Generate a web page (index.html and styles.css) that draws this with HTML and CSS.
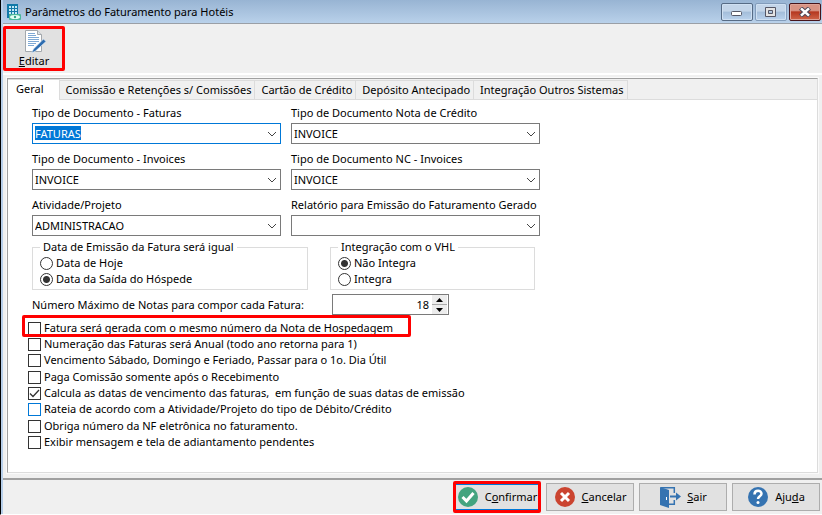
FILE: index.html
```html
<!DOCTYPE html>
<html lang="pt-BR">
<head>
  <meta charset="UTF-8">
  <meta name="viewport" content="width=device-width, initial-scale=1.0">
  <title>Parâmetros do Faturamento para Hotéis</title>
  <link rel="stylesheet" href="styles.css">
</head>
<body>
<div class="window">
  <header class="titlebar">
    <svg class="app-icon" width="14" height="16" viewBox="0 0 14 16">
      <path fill="#1279a8" d="M0 0h11v14H0z"/>
      <path fill="#c4e9f5" d="M2 2h2v2H2zM5 2h2v2H5zM8 2h2v2H8zM2 5h2v2H2zM5 5h2v2H5zM8 5h2v2H8zM2 8h2v2H2zM5 8h2v2H5zM8 8h2v2H8z"/>
      <rect x="2" y="10" width="12" height="6" rx="1" fill="#4cb79a"/>
      <ellipse cx="8" cy="13" rx="5" ry="2" fill="#e5fff5"/>
      <circle cx="8" cy="13" r="1.200" fill="#35a083"/>
    </svg>
    <h1 class="title">Parâmetros do Faturamento para Hotéis</h1>
    <div class="win-buttons">
      <button class="win-btn" aria-label="Minimizar">
        <svg width="12" height="10" viewBox="0 0 12 10"><rect x=".5" y="4.500" width="10" height="4" rx="1" fill="#fff" stroke="#555766"/></svg>
      </button>
      <button class="win-btn dim" aria-label="Maximizar">
        <svg width="12" height="10" viewBox="0 0 12 10"><path fill="#e4e4e4" fill-rule="evenodd" stroke="#555766" d="M.5.5h10v9H.5zM3.500 3.500h4v3h-4z"/></svg>
      </button>
      <button class="win-btn close" aria-label="Fechar">
        <svg width="12" height="10" viewBox="0 0 12 10"><path stroke="#4e4656" stroke-width="4.500" d="M1.500 1l9 8m0-8l-9 8"/><path stroke="#fff" stroke-width="2.500" d="M2 1.300l8 7.400m0-7.400L2 8.700"/></svg>
      </button>
    </div>
  </header>

  <div class="toolbar">
    <button class="tool-btn marked">
      <svg width="24" height="24" viewBox="0 0 24 24">
        <path fill="#fff" stroke="#a3a8ad" d="M3.500 1.500h12l4 4v17h-16z"/>
        <path fill="#dfe3e6" stroke="#a3a8ad" d="M15.500 1.500v4h4"/>
        <path stroke="#7fa9d4" d="M6 4.500h7M6 6.500h8M6 8.500h11M6 10.500h11M6 12.500h11M6 14.500h8M6 16.500h6"/>
        <path fill="#2d6cb0" stroke="#e9f1f9" stroke-width=".6" d="M21.500 10l2.500 2.500-10.500 9.500-4 2 2-4z"/>
      </svg>
      <span><u>E</u>ditar</span>
    </button>
  </div>

  <main class="pages">
    <nav class="tabs">
      <button class="tab active">Geral</button>
      <button class="tab">Comissão e Retenções s/ Comissões</button>
      <button class="tab">Cartão de Crédito</button>
      <button class="tab">Depósito Antecipado</button>
      <button class="tab">Integração Outros Sistemas</button>
    </nav>

    <form class="page">
      <div class="fields">
        <div class="field">
          <label for="docFaturas">Tipo de Documento - Faturas</label>
          <div class="combo">
            <select id="docFaturas" class="focused"><option>FATURAS</option></select>
            <svg class="arrow" width="10" height="6" viewBox="0 0 10 6"><path d="M1 1l4 4 4-4"/></svg>
          </div>
        </div>
        <div class="field">
          <label for="docNota">Tipo de Documento Nota de Crédito</label>
          <div class="combo">
            <select id="docNota"><option>INVOICE</option></select>
            <svg class="arrow" width="10" height="6" viewBox="0 0 10 6"><path d="M1 1l4 4 4-4"/></svg>
          </div>
        </div>
        <div class="field">
          <label for="docInvoices">Tipo de Documento - Invoices</label>
          <div class="combo">
            <select id="docInvoices"><option>INVOICE</option></select>
            <svg class="arrow" width="10" height="6" viewBox="0 0 10 6"><path d="M1 1l4 4 4-4"/></svg>
          </div>
        </div>
        <div class="field">
          <label for="docNC">Tipo de Documento NC - Invoices</label>
          <div class="combo">
            <select id="docNC"><option>INVOICE</option></select>
            <svg class="arrow" width="10" height="6" viewBox="0 0 10 6"><path d="M1 1l4 4 4-4"/></svg>
          </div>
        </div>
        <div class="field">
          <label for="atividade">Atividade/Projeto</label>
          <div class="combo">
            <select id="atividade"><option>ADMINISTRACAO</option></select>
            <svg class="arrow" width="10" height="6" viewBox="0 0 10 6"><path d="M1 1l4 4 4-4"/></svg>
          </div>
        </div>
        <div class="field">
          <label for="relatorio">Relatório para Emissão do Faturamento Gerado</label>
          <div class="combo">
            <select id="relatorio"><option></option></select>
            <svg class="arrow" width="10" height="6" viewBox="0 0 10 6"><path d="M1 1l4 4 4-4"/></svg>
          </div>
        </div>
      </div>

      <div class="groups">
        <fieldset class="group group-data">
          <legend>Data de Emissão da Fatura será igual</legend>
          <label class="option"><input type="radio" name="data">Data de Hoje</label>
          <label class="option"><input type="radio" name="data" checked>Data da Saída do Hóspede</label>
        </fieldset>
        <fieldset class="group group-vhl">
          <legend>Integração com o VHL</legend>
          <label class="option"><input type="radio" name="vhl" checked>Não Integra</label>
          <label class="option"><input type="radio" name="vhl">Integra</label>
        </fieldset>
      </div>

      <div class="max-row">
        <label for="maxNotas">Número Máximo de Notas para compor cada Fatura:</label>
        <div class="spin">
          <input type="text" id="maxNotas" value="18">
          <div class="spin-buttons">
            <button type="button" aria-label="Aumentar"><svg width="7" height="4" viewBox="0 0 7 4"><path d="M0 4l3.500-4L7 4z"/></svg></button>
            <button type="button" aria-label="Diminuir"><svg width="7" height="4" viewBox="0 0 7 4"><path d="M0 0l3.500 4L7 0z"/></svg></button>
          </div>
        </div>
      </div>

      <div class="checks">
        <div class="check-set">
          <label class="option marked"><input type="checkbox">Fatura será gerada com o mesmo número da Nota de Hospedagem</label>
          <label class="option"><input type="checkbox">Numeração das Faturas será Anual (todo ano retorna para 1)</label>
          <label class="option"><input type="checkbox">Vencimento Sábado, Domingo e Feriado, Passar para o 1o. Dia Útil</label>
        </div>
        <div class="check-set">
          <label class="option"><input type="checkbox">Paga Comissão somente após o Recebimento</label>
          <label class="option"><input type="checkbox" checked>Calcula as datas de vencimento das faturas,&nbsp; em função de suas datas de emissão</label>
          <label class="option"><input type="checkbox" class="hot">Rateia de acordo com a Atividade/Projeto do tipo de Débito/Crédito</label>
        </div>
        <div class="check-set">
          <label class="option"><input type="checkbox">Obriga número da NF eletrônica no faturamento.</label>
          <label class="option"><input type="checkbox">Exibir mensagem e tela de adiantamento pendentes</label>
        </div>
      </div>
    </form>
  </main>

  <footer class="footer">
    <button class="btn default marked">
      <svg width="22" height="22" viewBox="0 0 22 22"><circle cx="11" cy="11" r="10" fill="#43a47f"/><path fill="none" stroke="#fff" stroke-width="3" d="M5.500 11l4 4 7-8"/></svg>
      <span>C<u>o</u>nfirmar</span>
    </button>
    <button class="btn">
      <svg width="22" height="22" viewBox="0 0 22 22"><circle cx="11" cy="11" r="10" fill="#cb4430"/><path stroke="#fff" stroke-width="3" d="M7 7l8 8m0-8l-8 8"/></svg>
      <span><u>C</u>ancelar</span>
    </button>
    <button class="btn">
      <svg width="22" height="22" viewBox="0 0 22 22"><path fill="none" stroke="#3573b1" stroke-width="1.500" d="M2 1.700h13.300V7M15.300 14v4.300H9"/><path fill="#3573b1" d="M1 1l9 3v18l-9-3z"/><path fill="#fff" d="M7 11h1v3H7z"/><path fill="none" stroke="#3573b1" stroke-width="2" d="M11 10.500h9"/><path fill="#3573b1" d="M17 6.500l5 4-5 4z"/></svg>
      <span><u>S</u>air</span>
    </button>
    <button class="btn">
      <svg width="22" height="22" viewBox="0 0 22 22"><circle cx="11" cy="11" r="10" fill="#3573b1"/><path fill="none" stroke="#fff" stroke-width="2.500" d="M7.500 8.500c0-5 7-4.500 7-.8 0 2.600-3.500 2.600-3.500 5.300"/><circle cx="11" cy="16.500" r="1.500" fill="#fff"/></svg>
      <span>Aju<u>d</u>a</span>
    </button>
  </footer>
</div>
</body>
</html>
```
FILE: styles.css
```css
*, *::before {
  box-sizing: border-box;
}

body {
  margin: 0;
  background: #fff;
}

body, button, input, select {
  font-family: "Noto Sans", "Open Sans", sans-serif;
  font-size: 11px;
  line-height: 16px;
  color: #000;
}

button {
  padding: 0;
  border: 0;
}

svg {
  display: block;
  flex: none;
}

.window {
  display: flex;
  flex-direction: column;
  min-height: 100vh;
  background: #f0f0f0;
  border-left: 1px solid #000;
  border-bottom: 1px solid #fff;
  box-shadow: inset 2px 0 #b7cfea;
  padding-left: 2px;
}

/* title bar */
.titlebar {
  display: flex;
  align-items: center;
  height: 24px;
  padding: 0 1px 0 4px;
  background: linear-gradient(#98b4d3, #b9d1ea);
  border-bottom: 1px solid #9a9fa6;
}

.title {
  flex: 1;
  margin: 0 0 0 4px;
  font-size: 11px;
  font-weight: normal;
}

.win-buttons {
  display: flex;
  gap: 2px;
}

.win-btn {
  display: flex;
  align-items: center;
  justify-content: center;
  width: 32px;
  height: 18px;
  border: 1px solid #566b85;
  border-radius: 2px;
  background: linear-gradient(#c3d5e9 45%, #a3bdd9 50%, #bbd3ed);
  box-shadow: inset 0 0 0 1px #cfe0f2;
}

.win-btn.dim {
  border-color: #829cbb;
}

.win-btn.close {
  border-color: #45141b;
  background: linear-gradient(#d89384 40%, #b53820 50%, #cf6549);
  box-shadow: inset 0 0 0 1px #dfa397;
}

/* toolbar */
.toolbar {
  padding: 2px 0;
  border-bottom: 2px solid #fff;
}

.tool-btn {
  display: flex;
  flex-direction: column;
  align-items: center;
  width: 62px;
  height: 45px;
  background: #e1e1e1;
}

.marked {
  border: 3px solid #f00;
  border-radius: 2px;
}

/* tabbed pages */
.pages {
  flex: 1;
  display: flex;
  flex-direction: column;
  margin: 3px 4px 5px;
  border: 1px solid #a0a0a0;
  border-right-color: #dcdcdc;
  border-bottom-color: #dcdcdc;
  box-shadow: 0 0 0 1px #fafafa;
}

.tabs {
  display: flex;
  align-items: flex-end;
  height: 21px;
  border-bottom: 1px solid #dcdcdc;
}

.tab {
  height: 19px;
  padding: 0 3px 0 6px;
  background: #f0f0f0;
  border: 1px solid #dcdcdc;
  border-width: 1px 1px 0 0;
  white-space: nowrap;
}

.tab.active {
  height: 21px;
  margin-bottom: -1px;
  padding: 0 15px 2px 8px;
  background: #fff;
}

.page {
  flex: 1;
  padding: 5px 24px;
  background: #fff;
}

.fields {
  display: grid;
  grid-template-columns: 249px 249px;
  gap: 7px 10px;
}

.field label {
  display: block;
  margin-bottom: 2px;
  white-space: nowrap;
}

.combo {
  display: grid;
  align-items: center;
}

.combo select {
  grid-area: 1 / 1;
  width: 100%;
  height: 21px;
  padding: 0 18px 0 2px;
  appearance: none;
  background: #fff;
  border: 1px solid #7a7a7a;
  border-radius: 0;
}

.combo .focused {
  border-color: #0078d7;
  color: #fff;
  background: linear-gradient(#0078d7, #0078d7) no-repeat 2px 2px / 46px 14px #fff;
}

.arrow {
  grid-area: 1 / 1;
  justify-self: end;
  margin-right: 4px;
  fill: none;
  stroke: #444;
  pointer-events: none;
}

.groups {
  display: flex;
  gap: 22px;
  margin-top: 3px;
}

.group {
  height: 51px;
  margin: 0;
  padding: 0 7px;
  border: 1px solid #dcdcdc;
}

.group-data {
  width: 276px;
}

.group-vhl {
  width: 205px;
}

.group legend {
  padding: 0 3px;
}

.option {
  display: flex;
  align-items: center;
  gap: 3px;
  height: 16px;
  white-space: nowrap;
}

.option input {
  appearance: none;
  width: 13px;
  height: 13px;
  margin: 0;
  flex: none;
  border: 1px solid #333;
  background: #fff;
}

.option input[type=radio] {
  border-radius: 50%;
}

.option input[type=radio]:checked {
  background: radial-gradient(circle, #333 3px, #fff 4px);
}

.option input[type=checkbox]:checked {
  background: url("data:image/svg+xml,%3Csvg xmlns='http://www.w3.org/2000/svg' viewBox='0 0 11 11'%3E%3Cpath d='M1 5.500l3 3L10 2' fill='none' stroke='%23333' stroke-width='1.300'/%3E%3C/svg%3E");
}

.option .hot {
  border-color: #0078d7;
}

.max-row {
  display: flex;
  align-items: center;
  margin-top: 4px;
}

.max-row label {
  width: 300px;
}

.spin {
  display: flex;
  width: 117px;
  height: 21px;
  border: 1px solid #7a7a7a;
}

.spin input {
  flex: 1;
  min-width: 0;
  padding: 0 3px;
  border: 0;
  text-align: right;
}

.spin-buttons {
  display: flex;
  flex-direction: column;
  gap: 1px;
  width: 15px;
  margin-right: 1px;
  background: #aaa;
}

.spin-buttons button {
  flex: 1;
  display: flex;
  align-items: center;
  justify-content: center;
  background: #ececec;
}

.checks {
  display: flex;
  flex-direction: column;
  gap: 1px;
  margin: 5px 0 0 -4px;
}

/* red frame lies around the row without moving it */
.option.marked {
  position: relative;
  border: 0;
}

.option.marked::before {
  content: "";
  position: absolute;
  top: -5px;
  left: -6px;
  width: 389px;
  height: 22px;
  border: 3px solid #f00;
  border-radius: 2px;
}

/* bottom buttons */
.footer {
  display: flex;
  justify-content: flex-end;
  gap: 5px;
  padding: 1px 2px;
  border-top: 2px solid #a0a0a0;
}

.btn {
  display: flex;
  align-items: center;
  justify-content: center;
  gap: 6px;
  width: 88px;
  height: 28px;
  margin: 2px 0;
  background: #e1e1e1;
  border: 1px solid #adadad;
}

.btn.marked {
  height: 32px;
  margin: 0;
  border: 3px solid #f00;
  box-shadow: inset 0 1px #0078d7, inset 0 -1px #0078d7;
}
```
